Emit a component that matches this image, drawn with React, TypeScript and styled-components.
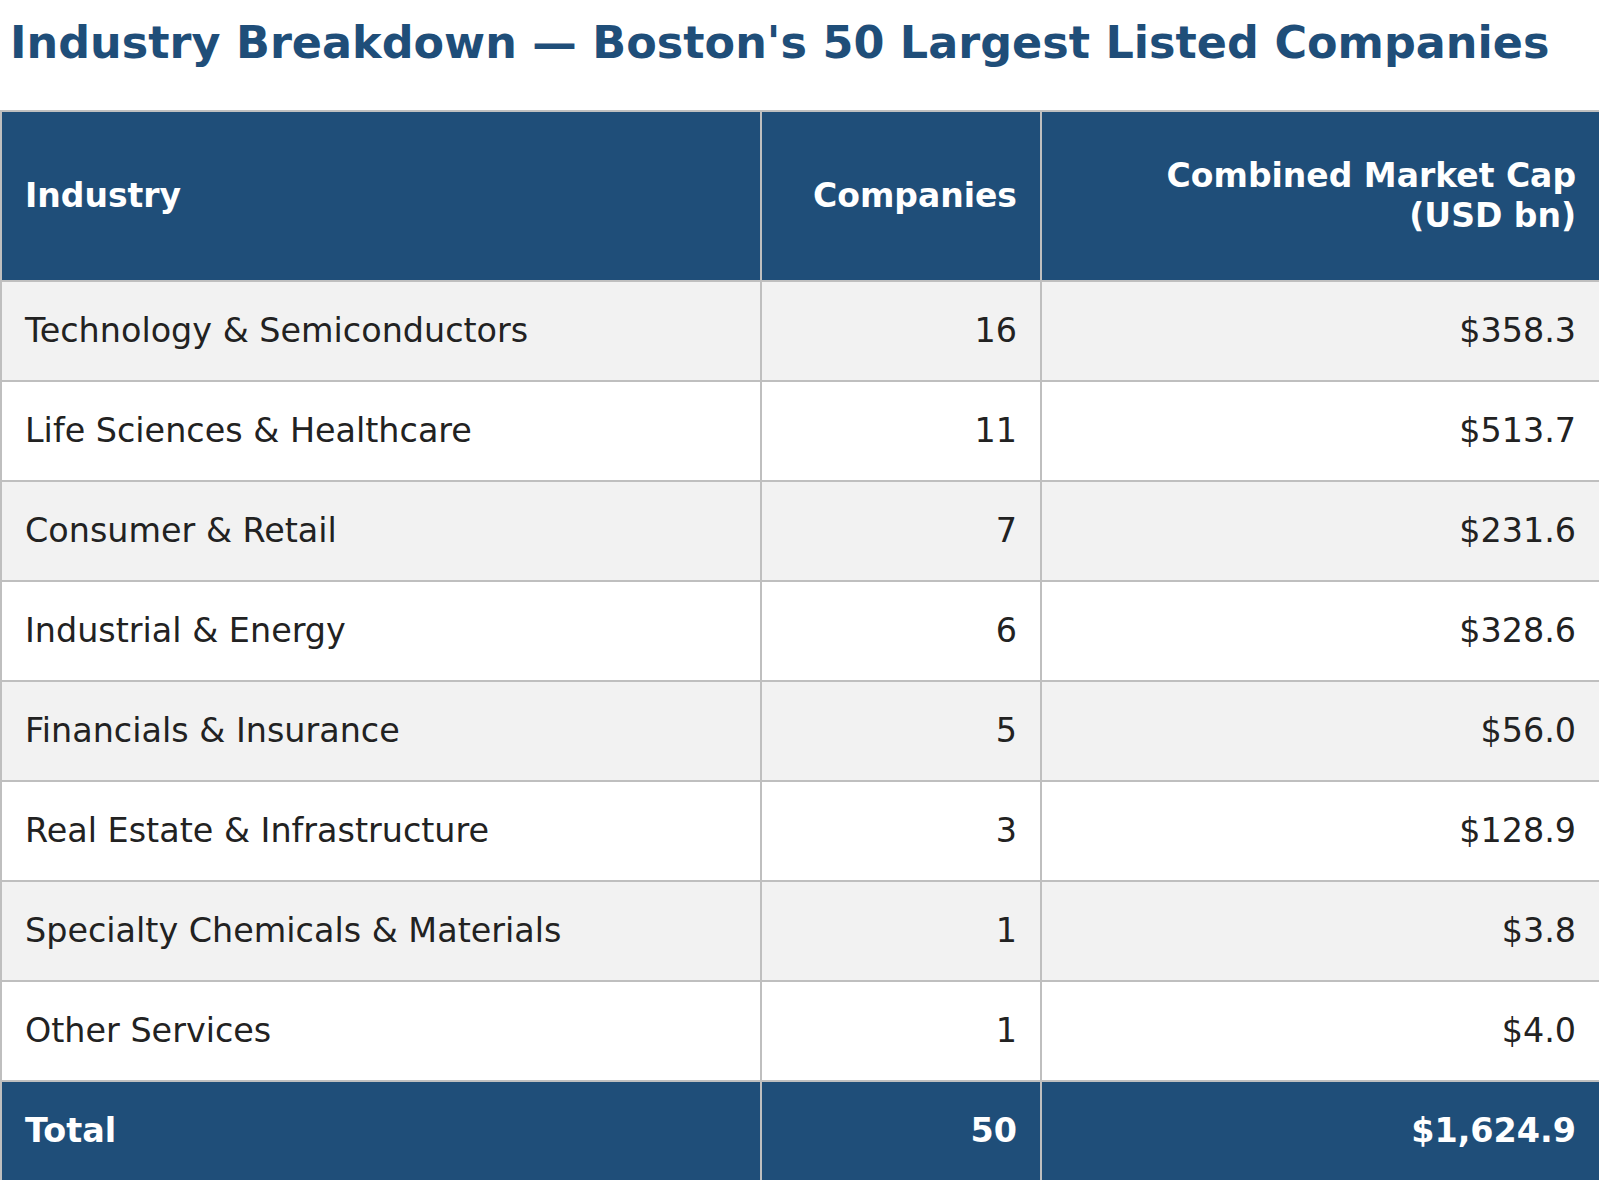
import React from 'react';
import styled, { createGlobalStyle } from 'styled-components';

const GlobalStyle = createGlobalStyle`
  html, body {
    margin: 0;
    padding: 0;
    background: #ffffff;
  }
  body {
    font-family: 'DejaVu Sans', 'Liberation Sans', sans-serif;
  }
`;

interface Row {
  industry: string;
  companies: number;
  cap: string;
}

const rows: Row[] = [
  { industry: 'Technology & Semiconductors', companies: 16, cap: '$358.3' },
  { industry: 'Life Sciences & Healthcare', companies: 11, cap: '$513.7' },
  { industry: 'Consumer & Retail', companies: 7, cap: '$231.6' },
  { industry: 'Industrial & Energy', companies: 6, cap: '$328.6' },
  { industry: 'Financials & Insurance', companies: 5, cap: '$56.0' },
  { industry: 'Real Estate & Infrastructure', companies: 3, cap: '$128.9' },
  { industry: 'Specialty Chemicals & Materials', companies: 1, cap: '$3.8' },
  { industry: 'Other Services', companies: 1, cap: '$4.0' },
];

const App = () => {
  return (
    <Page>
      <GlobalStyle />
      <Title>Industry Breakdown — Boston's 50 Largest Listed Companies</Title>
      <Table>
        <colgroup>
          <col style={{ width: 760 }} />
          <col style={{ width: 280 }} />
          <col />
        </colgroup>
        <thead>
          <tr>
            <HeadCell>Industry</HeadCell>
            <HeadCell align="right">Companies</HeadCell>
            <HeadCell align="right">
              Combined Market Cap
              <br />
              (USD bn)
            </HeadCell>
          </tr>
        </thead>
        <tbody>
          {rows.map((r, i) => (
            <BodyRow key={r.industry} striped={i % 2 === 0}>
              <Cell>{r.industry}</Cell>
              <Cell align="right">{r.companies}</Cell>
              <Cell align="right">{r.cap}</Cell>
            </BodyRow>
          ))}
        </tbody>
        <tfoot>
          <tr>
            <FootCell>Total</FootCell>
            <FootCell align="right">50</FootCell>
            <FootCell align="right">$1,624.9</FootCell>
          </tr>
        </tfoot>
      </Table>
    </Page>
  );
};

const Page = styled.div`
  width: 1599px;
  overflow: hidden;
`;

const Title = styled.h1`
  margin: 0;
  padding: 17px 10px 0;
  height: 110px;
  box-sizing: border-box;
  font-size: 44.5px;
  font-weight: bold;
  line-height: 52px;
  color: #1f4e79;
  white-space: nowrap;
`;

const Table = styled.table`
  width: 1599px;
  border-collapse: collapse;
  table-layout: fixed;
  border: 2px solid #bfbfbf;
  border-right: none;
`;

const HeadCell = styled.th<{ align?: 'left' | 'right' }>`
  height: 170px;
  box-sizing: border-box;
  padding: 0 23px 0 23px;
  background: #1f4e79;
  color: #ffffff;
  font-size: 33px;
  font-weight: bold;
  line-height: 40px;
  text-align: ${(p) => p.align ?? 'left'};
  vertical-align: middle;
  border: 2px solid #bfbfbf;

  &:last-child {
    border-right: none;
  }
`;

const BodyRow = styled.tr<{ striped: boolean }>`
  background: ${(p) => (p.striped ? '#f2f2f2' : '#ffffff')};
`;

const Cell = styled.td<{ align?: 'left' | 'right' }>`
  height: 100px;
  box-sizing: border-box;
  padding: 0 23px 0 23px;
  color: #222222;
  font-size: 33.4px;
  line-height: 40px;
  text-align: ${(p) => p.align ?? 'left'};
  vertical-align: middle;
  border: 2px solid #bfbfbf;

  &:last-child {
    border-right: none;
  }
`;

const FootCell = styled.td<{ align?: 'left' | 'right' }>`
  height: 100px;
  box-sizing: border-box;
  padding: 0 23px 0 23px;
  background: #1f4e79;
  color: #ffffff;
  font-size: 33.4px;
  font-weight: bold;
  line-height: 40px;
  text-align: ${(p) => p.align ?? 'left'};
  vertical-align: middle;
  border: 2px solid #bfbfbf;

  &:last-child {
    border-right: none;
  }
`;

export default App;
